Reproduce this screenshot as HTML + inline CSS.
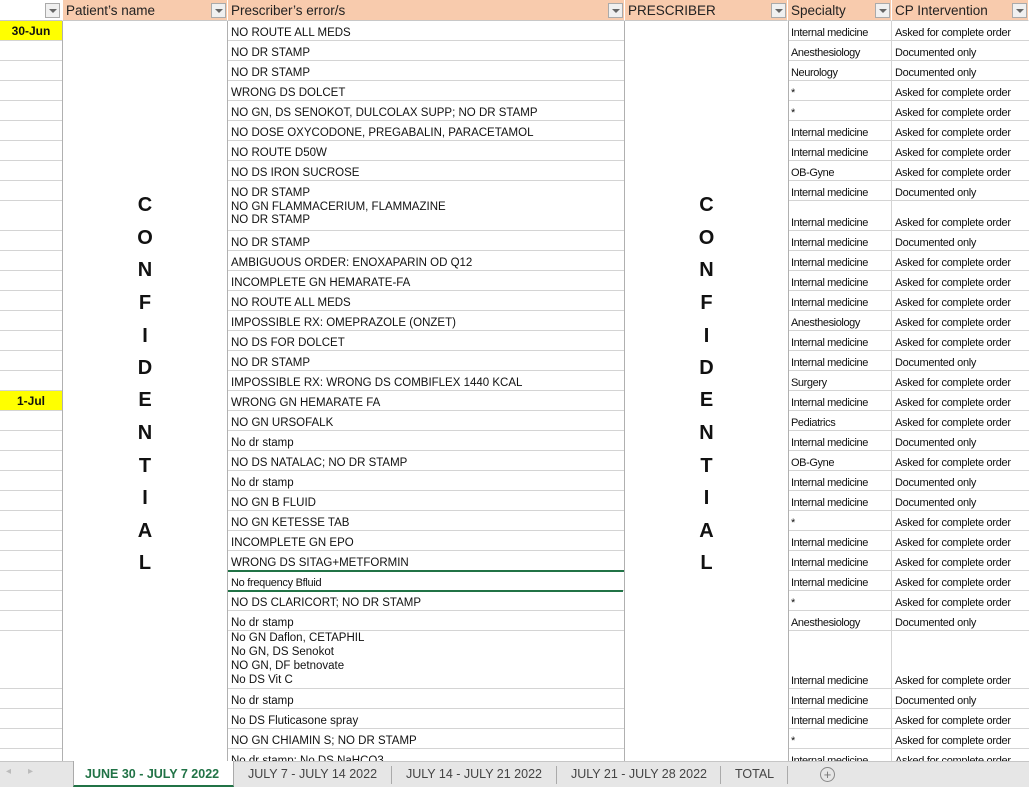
<!DOCTYPE html>
<html><head><meta charset="utf-8">
<style>
*{box-sizing:border-box;margin:0;padding:0}
body{width:1029px;height:787px;overflow:hidden;background:#fff;position:relative;font-family:"Liberation Sans",Arial,sans-serif;color:#111}
.r{position:absolute;left:0;width:1029px;display:flex}
.r>div{height:100%;border-bottom:1px solid #d4d4d4;border-right:1px solid #d4d4d4;display:flex;flex-direction:column;justify-content:flex-end;padding:0 0 0 3px;font-size:11.5px;line-height:14px;white-space:nowrap;overflow:hidden}
.a{width:63px}.b{width:165px}.c{width:397px}.d{width:163px}.e{width:104px;font-size:11px!important;letter-spacing:-0.4px}.f{width:137px;font-size:11px!important;letter-spacing:-0.3px;border-right:none!important}
.y{background:#ffff00;font-weight:bold;font-size:12px!important;align-items:center;justify-content:center!important;padding-left:0!important}
.merge{position:absolute;top:21px;height:740px;background:#fff;border-left:1px solid #b0b0b0;border-right:1px solid #b0b0b0}
.merge div{position:absolute;left:0;width:100%;text-align:center;font-weight:bold;font-size:20px;line-height:20px}
.hd{position:absolute;top:0;height:21px;background:#f8cbad;border-right:1px solid #fff;border-bottom:1px solid #c8c8c8;font-size:13.5px;line-height:22px;padding-left:3px;color:#222}
.fb{position:absolute;top:3px;width:15px;height:15px;border:1px solid #aaa;background:#f0f0f0}
.fb:after{content:"";position:absolute;left:3px;top:5px;border-left:4px solid transparent;border-right:4px solid transparent;border-top:4px solid #666}
.tabs{position:absolute;top:761px;left:0;width:1029px;height:26px;background:#e6e6e6;border-top:1px solid #c6c6c6;font-size:12.5px;color:#444}
.tabs span{position:absolute;top:5px}
.sep{position:absolute;top:4px;width:1px;height:18px;background:#aaa}
</style></head><body>

<div class="hd" style="left:0;width:63px;background:#fff"></div>
<div class="hd" style="left:63px;width:165px">Patient’s name</div>
<div class="hd" style="left:228px;width:397px">Prescriber’s error/s</div>
<div class="hd" style="left:625px;width:163px">PRESCRIBER</div>
<div class="hd" style="left:788px;width:104px">Specialty</div>
<div class="hd" style="left:892px;width:137px">CP Intervention</div>
<div class="fb" style="left:45px"></div><div class="fb" style="left:211px"></div><div class="fb" style="left:608px"></div><div class="fb" style="left:771px"></div><div class="fb" style="left:875px"></div><div class="fb" style="left:1012px"></div>

<div class="r" style="top:21px;height:20px"><div class="a y">30-Jun</div><div class="b"></div><div class="c">NO ROUTE ALL MEDS</div><div class="d"></div><div class="e">Internal medicine</div><div class="f">Asked for complete order</div></div>
<div class="r" style="top:41px;height:20px"><div class="a"></div><div class="b"></div><div class="c">NO DR STAMP</div><div class="d"></div><div class="e">Anesthesiology</div><div class="f">Documented only</div></div>
<div class="r" style="top:61px;height:20px"><div class="a"></div><div class="b"></div><div class="c">NO DR STAMP</div><div class="d"></div><div class="e">Neurology</div><div class="f">Documented only</div></div>
<div class="r" style="top:81px;height:20px"><div class="a"></div><div class="b"></div><div class="c">WRONG DS DOLCET</div><div class="d"></div><div class="e">*</div><div class="f">Asked for complete order</div></div>
<div class="r" style="top:101px;height:20px"><div class="a"></div><div class="b"></div><div class="c">NO GN, DS SENOKOT, DULCOLAX SUPP; NO DR STAMP</div><div class="d"></div><div class="e">*</div><div class="f">Asked for complete order</div></div>
<div class="r" style="top:121px;height:20px"><div class="a"></div><div class="b"></div><div class="c">NO DOSE OXYCODONE, PREGABALIN, PARACETAMOL</div><div class="d"></div><div class="e">Internal medicine</div><div class="f">Asked for complete order</div></div>
<div class="r" style="top:141px;height:20px"><div class="a"></div><div class="b"></div><div class="c">NO ROUTE D50W</div><div class="d"></div><div class="e">Internal medicine</div><div class="f">Asked for complete order</div></div>
<div class="r" style="top:161px;height:20px"><div class="a"></div><div class="b"></div><div class="c">NO DS IRON SUCROSE</div><div class="d"></div><div class="e">OB-Gyne</div><div class="f">Asked for complete order</div></div>
<div class="r" style="top:181px;height:20px"><div class="a"></div><div class="b"></div><div class="c" style="border-bottom-color:#fff">NO DR STAMP</div><div class="d"></div><div class="e">Internal medicine</div><div class="f">Documented only</div></div>
<div class="r" style="top:201px;height:30px"><div class="a"></div><div class="b"></div><div class="c" style="line-height:13px;padding-bottom:3px">NO GN FLAMMACERIUM, FLAMMAZINE<br>NO DR STAMP</div><div class="d"></div><div class="e">Internal medicine</div><div class="f">Asked for complete order</div></div>
<div class="r" style="top:231px;height:20px"><div class="a"></div><div class="b"></div><div class="c">NO DR STAMP</div><div class="d"></div><div class="e">Internal medicine</div><div class="f">Documented only</div></div>
<div class="r" style="top:251px;height:20px"><div class="a"></div><div class="b"></div><div class="c">AMBIGUOUS ORDER: ENOXAPARIN OD Q12</div><div class="d"></div><div class="e">Internal medicine</div><div class="f">Asked for complete order</div></div>
<div class="r" style="top:271px;height:20px"><div class="a"></div><div class="b"></div><div class="c">INCOMPLETE GN HEMARATE-FA</div><div class="d"></div><div class="e">Internal medicine</div><div class="f">Asked for complete order</div></div>
<div class="r" style="top:291px;height:20px"><div class="a"></div><div class="b"></div><div class="c">NO ROUTE ALL MEDS</div><div class="d"></div><div class="e">Internal medicine</div><div class="f">Asked for complete order</div></div>
<div class="r" style="top:311px;height:20px"><div class="a"></div><div class="b"></div><div class="c">IMPOSSIBLE RX: OMEPRAZOLE (ONZET)</div><div class="d"></div><div class="e">Anesthesiology</div><div class="f">Asked for complete order</div></div>
<div class="r" style="top:331px;height:20px"><div class="a"></div><div class="b"></div><div class="c">NO DS FOR DOLCET</div><div class="d"></div><div class="e">Internal medicine</div><div class="f">Asked for complete order</div></div>
<div class="r" style="top:351px;height:20px"><div class="a"></div><div class="b"></div><div class="c">NO DR STAMP</div><div class="d"></div><div class="e">Internal medicine</div><div class="f">Documented only</div></div>
<div class="r" style="top:371px;height:20px"><div class="a"></div><div class="b"></div><div class="c">IMPOSSIBLE RX: WRONG DS COMBIFLEX 1440 KCAL</div><div class="d"></div><div class="e">Surgery</div><div class="f">Asked for complete order</div></div>
<div class="r" style="top:391px;height:20px"><div class="a y">1-Jul</div><div class="b"></div><div class="c">WRONG GN HEMARATE FA</div><div class="d"></div><div class="e">Internal medicine</div><div class="f">Asked for complete order</div></div>
<div class="r" style="top:411px;height:20px"><div class="a"></div><div class="b"></div><div class="c">NO GN URSOFALK</div><div class="d"></div><div class="e">Pediatrics</div><div class="f">Asked for complete order</div></div>
<div class="r" style="top:431px;height:20px"><div class="a"></div><div class="b"></div><div class="c">No dr stamp</div><div class="d"></div><div class="e">Internal medicine</div><div class="f">Documented only</div></div>
<div class="r" style="top:451px;height:20px"><div class="a"></div><div class="b"></div><div class="c">NO DS NATALAC; NO DR STAMP</div><div class="d"></div><div class="e">OB-Gyne</div><div class="f">Asked for complete order</div></div>
<div class="r" style="top:471px;height:20px"><div class="a"></div><div class="b"></div><div class="c">No dr stamp</div><div class="d"></div><div class="e">Internal medicine</div><div class="f">Documented only</div></div>
<div class="r" style="top:491px;height:20px"><div class="a"></div><div class="b"></div><div class="c">NO GN B FLUID</div><div class="d"></div><div class="e">Internal medicine</div><div class="f">Documented only</div></div>
<div class="r" style="top:511px;height:20px"><div class="a"></div><div class="b"></div><div class="c">NO GN KETESSE TAB</div><div class="d"></div><div class="e">*</div><div class="f">Asked for complete order</div></div>
<div class="r" style="top:531px;height:20px"><div class="a"></div><div class="b"></div><div class="c">INCOMPLETE GN EPO</div><div class="d"></div><div class="e">Internal medicine</div><div class="f">Asked for complete order</div></div>
<div class="r" style="top:551px;height:20px"><div class="a"></div><div class="b"></div><div class="c">WRONG DS SITAG+METFORMIN</div><div class="d"></div><div class="e">Internal medicine</div><div class="f">Asked for complete order</div></div>
<div class="r" style="top:571px;height:20px"><div class="a"></div><div class="b"></div><div class="c" style="font-size:11px;letter-spacing:-0.3px">No frequency Bfluid</div><div class="d"></div><div class="e">Internal medicine</div><div class="f">Asked for complete order</div></div>
<div class="r" style="top:591px;height:20px"><div class="a"></div><div class="b"></div><div class="c">NO DS CLARICORT; NO DR STAMP</div><div class="d"></div><div class="e">*</div><div class="f">Asked for complete order</div></div>
<div class="r" style="top:611px;height:20px"><div class="a"></div><div class="b"></div><div class="c">No dr stamp</div><div class="d"></div><div class="e">Anesthesiology</div><div class="f">Documented only</div></div>
<div class="r" style="top:631px;height:58px"><div class="a"></div><div class="b"></div><div class="c" style="justify-content:flex-start;padding-top:0">No GN Daflon, CETAPHIL<br>No GN, DS Senokot<br>NO GN, DF betnovate<br>No DS Vit C</div><div class="d"></div><div class="e">Internal medicine</div><div class="f">Asked for complete order</div></div>
<div class="r" style="top:689px;height:20px"><div class="a"></div><div class="b"></div><div class="c">No dr stamp</div><div class="d"></div><div class="e">Internal medicine</div><div class="f">Documented only</div></div>
<div class="r" style="top:709px;height:20px"><div class="a"></div><div class="b"></div><div class="c">No DS Fluticasone spray</div><div class="d"></div><div class="e">Internal medicine</div><div class="f">Asked for complete order</div></div>
<div class="r" style="top:729px;height:20px"><div class="a"></div><div class="b"></div><div class="c">NO GN CHIAMIN S; NO DR STAMP</div><div class="d"></div><div class="e">*</div><div class="f">Asked for complete order</div></div>
<div class="r" style="top:749px;height:20px"><div class="a"></div><div class="b"></div><div class="c">No dr stamp; No DS NaHCO3</div><div class="d"></div><div class="e">Internal medicine</div><div class="f">Asked for complete order</div></div>

<div style="position:absolute;left:228px;top:570px;width:397px;height:2px;background:#217346"></div>
<div style="position:absolute;left:228px;top:590px;width:395px;height:2px;background:#217346"></div>

<div class="merge" style="left:62px;width:166px">
<div style="top:174px">C</div><div style="top:207px">O</div><div style="top:239px">N</div><div style="top:272px">F</div><div style="top:305px">I</div><div style="top:337px">D</div><div style="top:369px">E</div><div style="top:402px">N</div><div style="top:435px">T</div><div style="top:467px">I</div><div style="top:500px">A</div><div style="top:532px">L</div>
</div>
<div class="merge" style="left:624px;width:165px">
<div style="top:174px">C</div><div style="top:207px">O</div><div style="top:239px">N</div><div style="top:272px">F</div><div style="top:305px">I</div><div style="top:337px">D</div><div style="top:369px">E</div><div style="top:402px">N</div><div style="top:435px">T</div><div style="top:467px">I</div><div style="top:500px">A</div><div style="top:532px">L</div>
</div>

<div class="tabs">
<span style="left:6px;top:4px;color:#bbb;font-size:10px">◂</span><span style="left:28px;top:4px;color:#bbb;font-size:10px">▸</span>
<div style="position:absolute;left:73px;top:-1px;width:161px;height:26px;background:#fff;border-left:1px solid #aaa;border-right:1px solid #aaa;border-bottom:2px solid #217346"></div>
<span style="left:85px;color:#217346;font-weight:bold">JUNE 30 - JULY 7 2022</span>
<span style="left:248px">JULY 7 - JULY 14 2022</span><div class="sep" style="left:391px"></div>
<span style="left:406px">JULY 14 - JULY 21 2022</span><div class="sep" style="left:556px"></div>
<span style="left:571px">JULY 21 - JULY 28 2022</span><div class="sep" style="left:720px"></div>
<span style="left:735px">TOTAL</span><div class="sep" style="left:787px"></div>
<div style="position:absolute;left:820px;top:5px;width:15px;height:15px;border:1px solid #888;border-radius:50%;text-align:center;line-height:13px;font-size:13px;color:#777">+</div>
</div>
</body></html>
